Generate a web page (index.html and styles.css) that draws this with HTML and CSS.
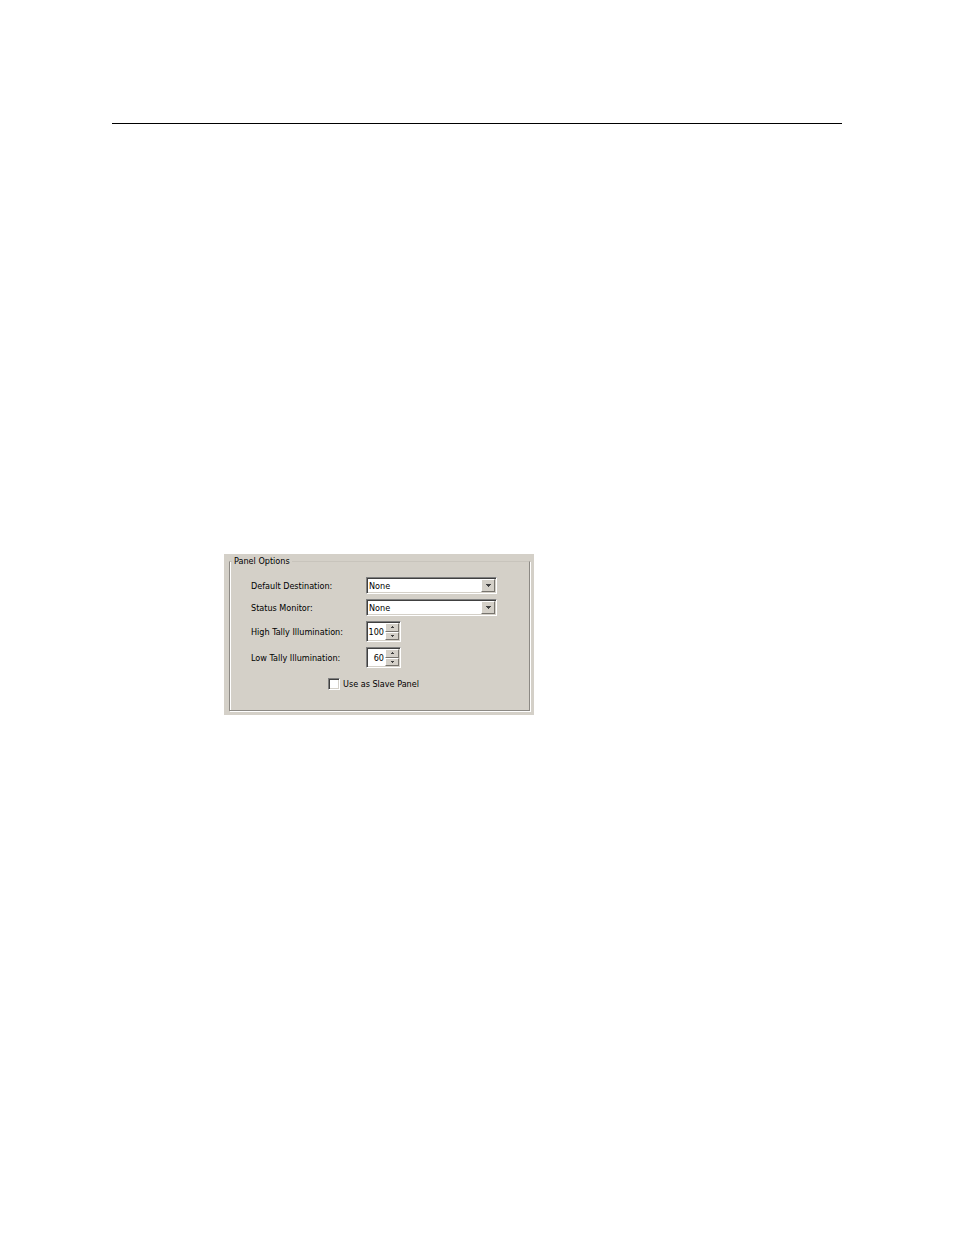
FILE: index.html
```html
<!DOCTYPE html>
<html lang="en">
<head>
    <meta charset="UTF-8">
    <meta name="viewport" content="width=device-width, initial-scale=1.0">
    <title>Panel Options</title>
    <link rel="stylesheet" href="styles.css">
</head>
<body>

<div class="page">
    <hr class="rule">

    <form class="panel">
        <fieldset class="options">
            <legend>Panel Options</legend>
            <div class="row">
                <label for="destination">Default Destination:</label>
                <div class="combo">
                    <select id="destination">
                        <option>None</option>
                    </select>
                    <span class="arrow"><svg width="5" height="3" viewBox="0 0 5 3"><path d="M0 0h5v1H4v1H3v1H2V2H1V1H0z"/></svg></span>
                </div>
            </div>
            <div class="row">
                <label for="monitor">Status Monitor:</label>
                <div class="combo">
                    <select id="monitor">
                        <option>None</option>
                    </select>
                    <span class="arrow"><svg width="5" height="3" viewBox="0 0 5 3"><path d="M0 0h5v1H4v1H3v1H2V2H1V1H0z"/></svg></span>
                </div>
            </div>
            <div class="row">
                <label for="highTally">High Tally Illumination:</label>
                <div class="spinner">
                    <input type="number" id="highTally" value="100">
                    <div class="steps">
                        <button type="button" aria-label="Increase" onclick="highTally.stepUp()"><svg width="3" height="2" viewBox="0 0 3 2"><path d="M1 0h1v1h1v1H0V1h1z"/></svg></button>
                        <button type="button" aria-label="Decrease" onclick="highTally.stepDown()"><svg width="3" height="2" viewBox="0 0 3 2"><path d="M0 0h3v1H2v1H1V1H0z"/></svg></button>
                    </div>
                </div>
            </div>
            <div class="row">
                <label for="lowTally">Low Tally Illumination:</label>
                <div class="spinner">
                    <input type="number" id="lowTally" value="60">
                    <div class="steps">
                        <button type="button" aria-label="Increase" onclick="lowTally.stepUp()"><svg width="3" height="2" viewBox="0 0 3 2"><path d="M1 0h1v1h1v1H0V1h1z"/></svg></button>
                        <button type="button" aria-label="Decrease" onclick="lowTally.stepDown()"><svg width="3" height="2" viewBox="0 0 3 2"><path d="M0 0h3v1H2v1H1V1H0z"/></svg></button>
                    </div>
                </div>
            </div>
            <div class="check">
                <input type="checkbox" id="slave">
                <label for="slave">Use as Slave Panel</label>
            </div>
        </fieldset>
    </form>
</div>

</body>
</html>
```
FILE: styles.css
```css
body {
    margin: 0;
    background-color: white;
    font-family: "DejaVu Sans Condensed", Tahoma, sans-serif;
    font-size: 9px;
    line-height: 14px;
    color: black;
}
.page {
    padding: 123px 112px 0;
}
.rule {
    margin: 0 0 430px;
    border: 0;
    border-top: 1px solid black;
}
.panel {
    box-sizing: border-box;
    max-width: 310px;
    margin-left: 112px;
    padding: 1px 4px 4px 5px;
    background-color: #d4d0c8;
}
.options {
    display: flex;
    flex-direction: column;
    gap: 5px;
    min-width: 0;
    margin: 0;
    padding: 9px 21px 19px;
    border: 1px solid #8c8984;
    border-top-color: #c8c4bc;
    box-shadow: 1px 1px 0 white, inset 1px 0 0 white;
}
.options legend {
    margin-left: -19px;
    padding: 0 2px;
    line-height: 13px;
}
.row {
    display: flex;
    align-items: center;
}
.row label {
    width: 115px;
    white-space: nowrap;
}
.combo, .spinner, .check input {
    box-sizing: border-box;
    padding: 1px;
    background-color: white;
    border: 1px solid;
    border-color: #808080 white white #808080;
    box-shadow: inset 1px 1px 0 #404040, inset -1px -1px 0 #d4d0c8;
}
.combo, .spinner {
    display: flex;
}
.combo {
    position: relative;
    width: 131px;
    height: 17px;
}
.combo select {
    width: 100%;
    margin: 0;
    padding: 0 16px 0 1px;
    border: 0;
    border-radius: 0;
    appearance: none;
    background: none;
    font: inherit;
    color: inherit;
}
.arrow, .steps button {
    display: flex;
    align-items: center;
    justify-content: center;
    box-sizing: border-box;
    background-color: #d4d0c8;
    border: 1px solid;
    border-color: white #77746e #77746e white;
    fill: #404040;
}
.arrow {
    position: absolute;
    top: 1px;
    right: 1px;
    bottom: 1px;
    width: 14px;
    pointer-events: none;
}
.spinner {
    width: 35px;
    height: 21px;
}
.spinner input {
    flex: 1;
    min-width: 0;
    margin: 0;
    padding: 0 1px 0 0;
    border: 0;
    appearance: textfield;
    background: none;
    font: inherit;
    text-align: right;
}
.spinner input::-webkit-inner-spin-button {
    display: none;
}
.steps {
    display: flex;
    flex-direction: column;
    width: 14px;
}
.steps button {
    flex: 1;
    min-height: 0;
    padding: 0;
}
.check {
    display: flex;
    align-items: center;
    gap: 3px;
    margin-top: 4px;
    padding-left: 77px;
}
.check input {
    width: 12px;
    height: 12px;
    margin: 0;
    appearance: none;
}
.check input:checked {
    background-color: #404040;
}
```
